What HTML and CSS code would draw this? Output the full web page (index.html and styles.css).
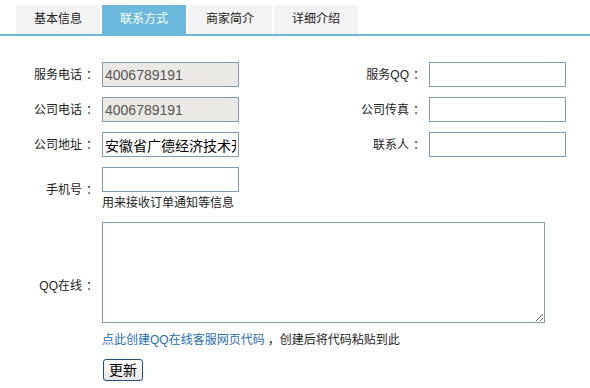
FILE: index.html
```html
<!DOCTYPE html>
<html lang="zh-CN">
<head>
    <meta charset="UTF-8">
    <meta name="viewport" content="width=device-width, initial-scale=1.0">
    <title>联系方式</title>
    <link rel="stylesheet" href="styles.css">
</head>
<body>
    <div class="tabs">
        <a class="tab">基本信息</a>
        <a class="tab active">联系方式</a>
        <a class="tab">商家简介</a>
        <a class="tab">详细介绍</a>
    </div>

    <form class="info-form">
        <label class="label">服务电话<span class="punct">：</span></label>
        <input class="field readonly" type="text" value="4006789191" readonly>
        <label class="label">服务QQ<span class="punct">：</span></label>
        <input class="field" type="text">

        <label class="label">公司电话<span class="punct">：</span></label>
        <input class="field readonly" type="text" value="4006789191" readonly>
        <label class="label">公司传真<span class="punct">：</span></label>
        <input class="field" type="text">

        <label class="label">公司地址<span class="punct">：</span></label>
        <input class="field address" type="text" value="安徽省广德经济技术开发区">
        <label class="label">联系人<span class="punct">：</span></label>
        <input class="field" type="text">

        <label class="label">手机号<span class="punct">：</span></label>
        <div class="cell">
            <input class="field" type="text">
            <p class="tip">用来接收订单通知等信息</p>
        </div>

        <label class="label">QQ在线<span class="punct">：</span></label>
        <div class="cell">
            <textarea class="qq-code"></textarea>
            <p class="tip link-tip"><a href="#">点此创建QQ在线客服网页代码</a><span class="comma">，</span>创建后将代码粘贴到此</p>
        </div>

        <div class="cell submit">
            <button type="button" class="button">更新</button>
        </div>
    </form>
</body>
</html>
```

FILE: styles.css
```css
body {
    margin: 0;
    font-family: "Liberation Sans", "Noto Sans CJK SC", sans-serif;
    font-size: 12px;
    color: #222;
    background-color: white;
}
.tabs {
    display: flex;
    gap: 2px;
    padding: 5px 0 0 16px;
    border-bottom: 2px solid #6cb9dd;
}
.tab {
    width: 84px;
    height: 29px;
    line-height: 29px;
    text-align: center;
    background-color: #f3f3f3;
    color: #222;
    cursor: pointer;
}
.tab.active {
    background-color: #6cb9dd;
    color: white;
}
.info-form {
    display: grid;
    grid-template-columns: 94px 137px 174px 137px;
    column-gap: 8px;
    row-gap: 10px;
    margin-top: 26px;
}
.label {
    align-self: center;
    text-align: right;
    line-height: 18px;
}
/* full-width punctuation sits centred in the original font */
.punct {
    display: inline-block;
    margin-left: 4px;
    margin-right: -4px;
}
.field {
    box-sizing: border-box;
    width: 137px;
    height: 25px;
    margin: 0;
    padding: 0 2px;
    border: 1px solid #7f9db9;
    font-family: "Liberation Sans", "Noto Sans CJK SC", sans-serif;
    font-size: 14px;
    color: #000;
    background-color: white;
    outline: none;
}
.field.readonly {
    background-color: #ebe9e4;
    color: #555;
}
.cell {
    grid-column: 2 / span 3;
}
.tip {
    margin: 2px 0 0;
    line-height: 18px;
}
.qq-code {
    display: block;
    box-sizing: border-box;
    width: 443px;
    height: 101px;
    margin: 0;
    border: 1px solid #7f9db9;
}
.link-tip {
    margin-top: 8px;
}
.link-tip a {
    color: #1f6db5;
    text-decoration: none;
}
.comma {
    margin-left: 3px;
}
.submit {
    grid-column: 2 / span 3;
    padding-left: 1px;
}
.button {
    height: 22px;
    padding: 0 5px;
    border: 1px solid #1d4f7f;
    border-radius: 3px;
    background: linear-gradient(#ffffff, #e6e6e6);
    font-family: "Liberation Sans", "Noto Sans CJK SC", sans-serif;
    font-size: 14px;
    line-height: 18px;
    color: #000;
    cursor: pointer;
}
```
